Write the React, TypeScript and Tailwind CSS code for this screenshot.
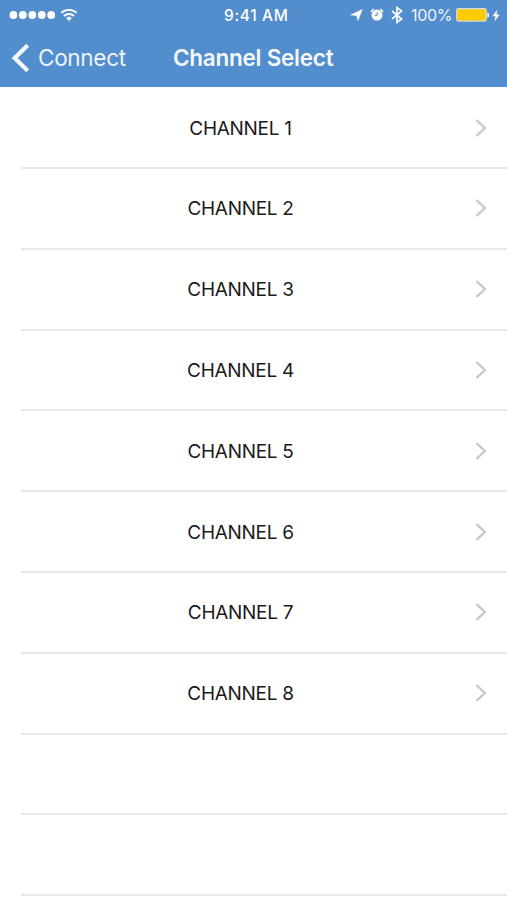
const CHANNELS = [1, 2, 3, 4, 5, 6, 7, 8];
const EMPTY_ROWS = [9, 10];

function StatusBar() {
  return (
    <div className="flex h-[30px] items-center">
      <div className="flex w-[224px] items-center pl-[9px]">
        <svg width="47" height="10" viewBox="0 0 47 10" fill="white">
          <circle cx="4.4" cy="5" r="3.9" />
          <circle cx="13.8" cy="5" r="3.9" />
          <circle cx="23.3" cy="5" r="3.9" />
          <circle cx="32.8" cy="5" r="3.9" />
          <circle cx="42.2" cy="5" r="3.9" />
        </svg>
        <svg className="ml-[4px]" width="18" height="14" viewBox="0 0 18 14" fill="none" stroke="white" strokeWidth="1.9">
          <path d="M1.4 4.9a11 11 0 0 1 15.2 0" />
          <path d="M4 8a7.1 7.1 0 0 1 10 0" />
          <path d="M9 13 6.2 10.2a4 4 0 0 1 5.6 0z" fill="white" stroke="none" />
        </svg>
      </div>
      <span className="w-[66px] whitespace-nowrap pt-px text-[15.5px] font-medium leading-[29px] tracking-[0.65px]">9:41 AM</span>
      <div className="flex flex-1 items-center justify-end pr-[7px]">
        <svg width="13" height="12" viewBox="0 0 13 12" fill="white">
          <path d="M12.3.5 7.9 11.7 6.7 6.6.6 5.9z" stroke="white" strokeWidth=".5" />
        </svg>
        <svg className="ml-[7px]" width="14" height="14" viewBox="0 0 14 14">
          <circle cx="7" cy="7.1" r="5.5" fill="white" />
          <path d="M.9 4A8 8 0 0 1 3.8 1.2M10.2 1.2A8 8 0 0 1 13.1 4" fill="none" stroke="white" strokeWidth="1.4" />
          <path d="M7.2 3.8v3.5H4.6" fill="none" stroke="#528dcd" strokeWidth="1" />
        </svg>
        <svg className="ml-[7px]" width="12" height="18" viewBox="0 0 12 18" fill="none" stroke="white" strokeWidth="1.7">
          <path d="m1 5 9.6 8L6 16.5v-15L10.6 5 1 13" />
        </svg>
        <span className="ml-[8px] w-[41px] whitespace-nowrap text-[16px] leading-[30px] tracking-[-0.3px] text-[#edf4fc]">100%</span>
        <svg className="ml-[4px]" width="34" height="14" viewBox="0 0 34 14">
          <rect x=".7" y=".7" width="29.6" height="12.4" rx="1.5" fill="#ffcc00" stroke="#cfdae3" strokeWidth="1.2" />
          <path d="M31.4 4.4c2.4.4 2.4 4.8 0 5.2z" fill="white" />
        </svg>
        <svg className="ml-[2px]" width="8" height="13" viewBox="0 0 8 13" fill="white">
          <path d="M5.4.4.4 7.2h3L2.6 12.6 7.7 5.5H4.5z" />
        </svg>
      </div>
    </div>
  );
}

function NavBar() {
  return (
    <div className="flex h-[56px] items-center">
      <button className="flex w-[173px] items-center pl-[11px]">
        <svg width="19" height="30" viewBox="0 0 19 30" fill="none" stroke="#f4f8fd" strokeWidth="4.2">
          <path d="M16.7 2.2 3.7 15l13 12.8" />
        </svg>
        <span className="ml-[8px] text-[22.5px] leading-[30px] tracking-[-0.3px] text-[#edf4fc]">Connect</span>
      </button>
      <h1 className="whitespace-nowrap text-[22.5px] font-semibold leading-[30px] tracking-[-0.25px] text-[#f4f8fd]">Channel Select</h1>
    </div>
  );
}

function ChannelRow({ channel }: { channel?: number }) {
  return (
    <li className="ml-[21px] flex h-[80.8px] items-center border-b-2 border-[#e8e8ea]">
      {channel && (
        <>
          <span className="w-[439px] whitespace-nowrap pt-[2px] text-center text-[19px] leading-[28px] tracking-[-0.3px] text-[#1a1a1a]">
            CHANNEL {channel}
          </span>
          <svg className="ml-[15px]" width="12" height="18" viewBox="0 0 12 18" fill="none" stroke="#c7c7cc" strokeWidth="2.3">
            <path d="m1.5 1.2 8.4 7.8-8.4 7.8" />
          </svg>
        </>
      )}
    </li>
  );
}

export default function App() {
  return (
    <div className="h-[900px] w-[507px] overflow-hidden bg-white font-['Inter','Liberation_Sans',sans-serif]">
      <header className="h-[87.4px] bg-[#528dcd] text-white">
        <StatusBar />
        <NavBar />
      </header>
      <ul className="pt-[0.8px]">
        {CHANNELS.map(n => <ChannelRow key={n} channel={n} />)}
        {EMPTY_ROWS.map(n => <ChannelRow key={n} />)}
      </ul>
    </div>
  );
}
